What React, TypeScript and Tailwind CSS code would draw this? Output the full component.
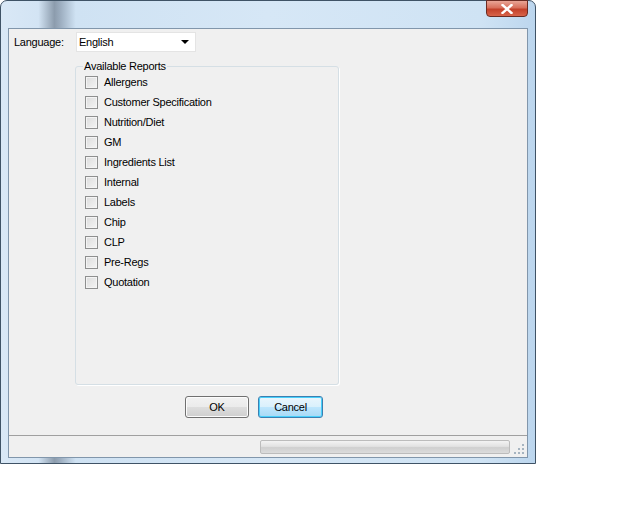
import React from 'react'

const reports = [
  'Allergens',
  'Customer Specification',
  'Nutrition/Diet',
  'GM',
  'Ingredients List',
  'Internal',
  'Labels',
  'Chip',
  'CLP',
  'Pre-Regs',
  'Quotation',
]

const CheckRow = ({ label }: { label: string }) => (
  <label className="flex items-center h-[20px]">
    <span className="w-[13px] h-[13px] border border-[#8e8f8f] bg-[linear-gradient(135deg,#dcdcdc,#f4f4f4)] shadow-[inset_0_0_0_1px_#f4f4f4]" />
    <span className="ml-[6px] text-[11px] text-black">{label}</span>
  </label>
)

const App = () => {
  return (
    <div className="w-[640px] h-[512px] bg-white font-['Liberation_Sans',Arial,sans-serif] tracking-[-0.25px]">
      <div className="w-[536px] h-[464px] flex flex-col rounded-t-[7px] border border-[#3f5366] bg-[linear-gradient(90deg,#d9e8f6_0%,#d3e4f4_7%,#8c9cad_10%,#9aabbd_11%,#cfe2f3_14%,#d6e7f6_50%,#cfe3f4_90%,#bcd6ee_100%)]">
        {/* title bar */}
        <div className="h-[27px] flex justify-end pr-[7px] shrink-0">
          <div className="w-[42px] h-[17px] -mt-px rounded-b-[4px] border border-[#6b2b22] bg-[linear-gradient(180deg,#e9a596_0%,#d8705c_45%,#c3412a_55%,#d8644a_100%)] flex items-center justify-center">
            <svg width="12" height="10" viewBox="0 0 12 10">
              <path d="M1.5 1 L10.5 9 M10.5 1 L1.5 9" stroke="#fff" strokeWidth="2.4" strokeLinecap="square" />
            </svg>
          </div>
        </div>

        {/* client area */}
        <div className="mx-[7px] h-[430px] border border-[#8196ab] bg-[#f0f0f0] flex flex-col text-[11px] text-black">
          <div className="flex items-center pt-[3px] pl-[5px]">
            <span className="w-[62px]">Language:</span>
            <div className="w-[120px] h-[20px] bg-white border border-[#e4e4e4] flex items-center pl-[2px] pr-[6px]">
              <span className="flex-1">English</span>
              <svg width="8" height="4" viewBox="0 0 8 4">
                <path d="M0 0 H8 L4 4 Z" fill="#000" />
              </svg>
            </div>
          </div>

          <fieldset className="ml-[66px] mt-[8px] w-[264px] h-[325px] border border-[#d5dfe5] rounded-[3px] pl-[9px] shadow-[1px_1px_0_#ffffff]">
            <legend className="-ml-[2px] px-[1px] leading-[13px]">Available Reports</legend>
            <div className="flex flex-col -mt-[1px]">
              {reports.map((r) => (
                <CheckRow key={r} label={r} />
              ))}
            </div>
          </fieldset>

          <div className="flex gap-[9px] ml-[176px] mt-[11px]">
            <button className="w-[64px] h-[22px] rounded-[3px] border border-[#707070] bg-[linear-gradient(180deg,#f2f2f2_0%,#ebebeb_50%,#dddddd_51%,#cfcfcf_100%)] shadow-[inset_0_0_0_1px_#fcfcfc]">
              OK
            </button>
            <button className="w-[65px] h-[22px] rounded-[3px] border border-[#3c7fb1] bg-[linear-gradient(180deg,#eaf6fd_0%,#d9f0fc_50%,#bee6fd_51%,#a7d9f5_100%)] shadow-[inset_0_0_0_1px_#48d0fb]">
              Cancel
            </button>
          </div>

          <div className="mt-auto h-[22px] border-t border-[#a0a0a0] flex items-center">
            <div className="ml-[251px] w-[250px] h-[14px] rounded-[2px] border border-[#bcbcbc] bg-[linear-gradient(180deg,#f3f3f3_0%,#e2e2e2_45%,#cfcfcf_55%,#dcdcdc_100%)]" />
            <svg className="ml-[4px] mt-[6px]" width="11" height="11" viewBox="0 0 11 11">
              <g fill="#a6b4c0">
                <rect x="8" y="0" width="2" height="2" />
                <rect x="4" y="4" width="2" height="2" />
                <rect x="8" y="4" width="2" height="2" />
                <rect x="0" y="8" width="2" height="2" />
                <rect x="4" y="8" width="2" height="2" />
                <rect x="8" y="8" width="2" height="2" />
              </g>
            </svg>
          </div>
        </div>
      </div>
    </div>
  )
}

export default App
